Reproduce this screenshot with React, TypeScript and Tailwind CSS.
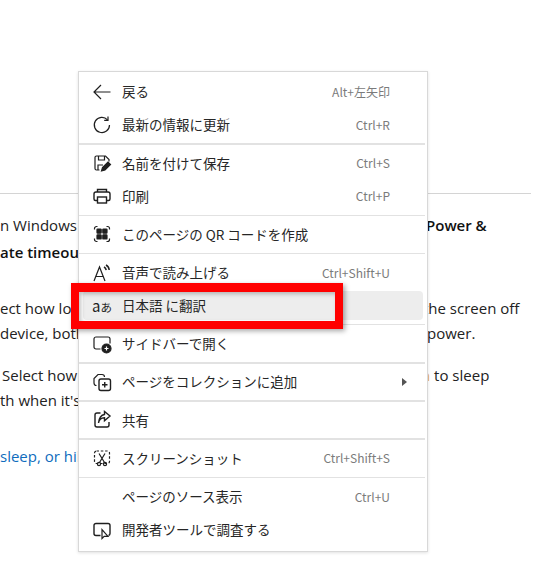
import type { ReactNode } from 'react'

const jp = 'font-["Noto_Sans_CJK_JP","Noto_Sans",sans-serif]'

function Ico({ children }: { children: ReactNode }) {
  return (
    <svg viewBox="0 0 20 20" className="w-5 h-5 text-[#1f1f1f]" fill="none" stroke="currentColor" strokeWidth="1.2">
      {children}
    </svg>
  )
}

const icons = {
  back: <Ico><path d="M18.500 10H2.500M9 3 2 10l7 7" /></Ico>,
  reload: <Ico><path d="M15.500 4.800A7.600 7.600 0 1 0 17.500 10" /><path d="M16 1.500v3.800h-3.800" /></Ico>,
  save: (
    <Ico>
      <path d="M7.500 17H4.500A1.500 1.500 0 0 1 3 15.500V4.500A1.500 1.500 0 0 1 4.500 3h9L17 6.500V8.500" />
      <path d="M6.500 3v4h6V3M6 17v-5h5" />
      <path d="M9.500 18l1-3.500 5.500-5.500 2.500 2.500-5.500 5.500z" fill="currentColor" />
    </Ico>
  ),
  print: (
    <Ico>
      <path d="M5.500 6V3.500h9V6" strokeWidth="1.400" />
      <path d="M5.500 14.500H3.500A1.500 1.500 0 0 1 2 13V8A2 2 0 0 1 4 6h12a2 2 0 0 1 2 2v5a1.500 1.500 0 0 1-1.500 1.500h-2" strokeWidth="1.400" />
      <rect x="5.500" y="11" width="9" height="6" strokeWidth="1.400" />
    </Ico>
  ),
  qr: (
    <Ico>
      <path d="M2.500 5.500v-1a2 2 0 0 1 2-2h1M14.500 2.500h1a2 2 0 0 1 2 2v1M17.500 14.500v1a2 2 0 0 1-2 2h-1M5.500 17.500h-1a2 2 0 0 1-2-2v-1" />
      <rect x="5" y="5" width="4.200" height="4.200" rx=".6" fill="currentColor" />
      <rect x="10.800" y="5" width="4.200" height="4.200" rx=".6" fill="currentColor" />
      <rect x="5" y="10.800" width="4.200" height="4.200" rx=".6" fill="currentColor" />
      <rect x="10.800" y="10.800" width="4.200" height="4.200" rx=".6" fill="currentColor" />
    </Ico>
  ),
  read: (
    <Ico>
      <path d="M2 18 7.500 4 13 18M4 13.500h7" />
      <path d="M12 4c1.300.7 2 1.800 2.200 3.200M14 2c1.900 1.100 3 2.900 3.200 5" strokeWidth="1.500" />
    </Ico>
  ),
  sidebar: (
    <Ico>
      <path d="M8.500 15H4a2 2 0 0 1-2-2V5a2 2 0 0 1 2-2h12a2 2 0 0 1 2 2v4.500" />
      <circle cx="14.500" cy="14.500" r="4.500" fill="currentColor" />
      <path d="M14.500 12.500v4M12.500 14.500h4" stroke="#fff" />
    </Ico>
  ),
  collection: (
    <Ico>
      <rect x="7" y="7" width="11.500" height="11.500" rx="2" strokeWidth="1.400" />
      <path d="M12.750 10v5.500M10 12.750h5.500" strokeWidth="1.400" />
      <path d="M4.500 13.500A2.500 2.500 0 0 1 2 11V6.500L6 2.500h4A2.500 2.500 0 0 1 12.500 5" />
    </Ico>
  ),
  share: (
    <Ico>
      <path d="M8.500 3H5a2 2 0 0 0-2 2v10a2 2 0 0 0 2 2h10a2 2 0 0 0 2-2v-3" strokeWidth="1.400" />
      <path d="M6.500 13c.4-3.300 2.800-5.200 6-5.300v3L18 6l-5.500-4.500v3C9 5 7 8.500 6.500 13z" strokeWidth="1.400" />
    </Ico>
  ),
  shot: (
    <Ico>
      <rect x="2.500" y="3" width="15" height="12.500" rx="2" strokeDasharray="2.500 1.800" />
      <path d="M7 5.500l5.500 9M13 5.500l-5.500 9" />
      <circle cx="7" cy="16" r="1.600" />
      <circle cx="13" cy="16" r="1.600" />
    </Ico>
  ),
  devtools: (
    <Ico>
      <path d="M8.500 15.500H4a2 2 0 0 1-2-2V5.500a2 2 0 0 1 2-2h12a2 2 0 0 1 2 2v8a2 2 0 0 1-1.500 2" strokeWidth="1.400" />
      <path d="M10 9.500v9l2.200-2.200h3.800z" fill="#fff" />
    </Ico>
  ),
}

type Item = { icon?: ReactNode; label: ReactNode; hint?: string; active?: boolean; arrow?: boolean }

const groups: Item[][] = [
  [
    { icon: icons.back, label: '戻る', hint: 'Alt+左矢印' },
    { icon: icons.reload, label: '最新の情報に更新', hint: 'Ctrl+R' },
  ],
  [
    { icon: icons.save, label: '名前を付けて保存', hint: 'Ctrl+S' },
    { icon: icons.print, label: '印刷', hint: 'Ctrl+P' },
  ],
  [{ icon: icons.qr, label: 'このページの QR コードを作成' }],
  [
    { icon: icons.read, label: '音声で読み上げる', hint: 'Ctrl+Shift+U' },
    {
      icon: (
        <span className="flex items-baseline whitespace-nowrap leading-none text-[#1f1f1f]">
          <span className="text-[15px]">a</span>
          <span className="text-[11.500px]">あ</span>
        </span>
      ),
      label: '日本語 に翻訳',
      active: true,
    },
  ],
  [{ icon: icons.sidebar, label: 'サイドバーで開く' }],
  [{ icon: icons.collection, label: 'ページをコレクションに追加', arrow: true }],
  [{ icon: icons.share, label: '共有' }],
  [{ icon: icons.shot, label: 'スクリーンショット', hint: 'Ctrl+Shift+S' }],
  [
    { label: 'ページのソース表示', hint: 'Ctrl+U' },
    { icon: icons.devtools, label: '開発者ツールで調査する' },
  ],
]

function MenuRow({ item }: { item: Item }) {
  return (
    <div className={`h-[33px] mx-[4px] flex items-center ${item.active ? 'py-[2px]' : ''}`}>
      <div className={`w-full h-full pl-[9px] pr-[33px] flex items-center rounded-[4px] ${item.active ? 'bg-[#ededed]' : ''}`}>
        <span className="w-5 h-5 flex items-center justify-center shrink-0">{item.icon}</span>
        <span className="ml-[10px] -mt-px text-[13.500px] text-[#262626]">{item.label}</span>
        {item.hint && <span className="ml-auto text-[12px] text-[#7b7b7b]">{item.hint}</span>}
        {item.arrow && (
          <span className="ml-auto -mr-[17px] w-0 h-0 border-y-[4px] border-y-transparent border-l-[5px] border-l-[#555]" />
        )}
      </div>
    </div>
  )
}

export default function App() {
  return (
    <div className={`relative w-[557px] h-[573px] bg-white overflow-hidden ${jp}`}>
      {/* page behind the menu */}
      <div className="h-px bg-[#d4d4d4] w-[531px] absolute top-[193px] left-0" />
      <div className="pt-px text-[15px] leading-[22px] text-[#222] font-['Open_Sans',sans-serif] whitespace-nowrap">
        <div className="mt-[213px] flex">
          <div className="w-[78px]">n Windows</div>
          <div className="ml-[348px] font-semibold text-[#111]">Power &amp;</div>
        </div>
        <div className="mt-[5px] font-semibold text-[#111]">ate timeout</div>
        <div className="mt-[34px] flex">
          <div className="w-[78px]">ect how long</div>
          <div className="ml-[345px]">the screen off</div>
        </div>
        <div className="mt-[3px] flex">
          <div className="w-[78px]">device, both</div>
          <div className="ml-[349px]">power.</div>
        </div>
        <div className="mt-[20px] flex pl-[2px]">
          <div className="w-[76px]">Select how</div>
          <div className="ml-[343px]"><span className="text-[#e8b45a]">n</span> to sleep</div>
        </div>
        <div className="mt-[3px]">th when it's</div>
        <div className="mt-[34px] text-[#0f6cbd]">sleep, or hibernate</div>
      </div>

      {/* context menu */}
      <div className="absolute left-[78px] top-[71px] w-[350px] h-[481px] bg-white border border-[#d8d8d8] shadow-[0_1px_3px_rgba(0,0,0,0.12)] pt-[3.500px]">
        {groups.map((g, i) => (
          <div key={i}>
            {i > 0 && <div className="h-[1.500px] bg-[#e2e2e2] my-[1.850px] mr-[2px]" />}
            {g.map((item, j) => (
              <MenuRow key={j} item={item} />
            ))}
          </div>
        ))}
      </div>

      {/* red annotation box */}
      <div className="absolute left-[71px] top-[283px] w-[272px] h-[46px] border-[8px] border-t-[9px] border-[#ff0000] shadow-[2px_2px_5px_rgba(0,0,0,0.35),inset_2px_2px_4px_rgba(0,0,0,0.25)]" />
    </div>
  )
}
